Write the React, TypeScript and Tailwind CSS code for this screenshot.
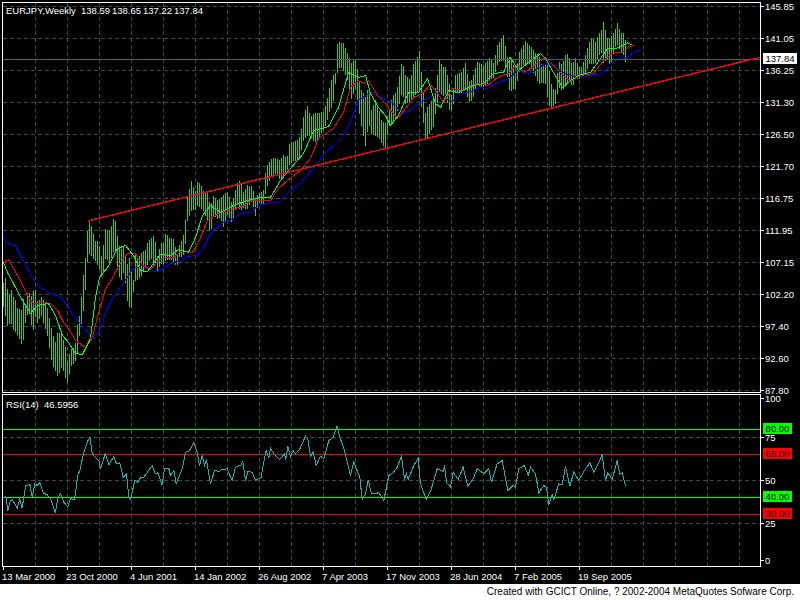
const zoomBars = (ox: number, oy: number, d: number[][]) =>
  d.map(([X, hi, lo]) => [ox + X / 3, oy + hi / 3, oy + lo / 3]);

const keyBars: number[][] = [
  ...zoomBars(0, 200, [
    [10, 250, 318], [16, 230, 350], [22, 275, 380], [28, 285, 365], [35, 262, 370], [40, 300, 390], [46, 300, 395], [52, 330, 402], [58, 325, 418], [64, 330, 432], [70, 290, 415], [76, 320, 355], [82, 270, 340], [88, 280, 340], [94, 290, 380], [100, 270, 390], [106, 270, 340], [112, 310, 370], [122, 290, 340], [130, 300, 370], [140, 320, 400], [155, 395, 490], [165, 425, 510], [172, 393, 528], [185, 405, 495], [195, 440, 530], [202, 490, 548], [210, 445, 500], [217, 450, 490], [225, 430, 480], [232, 365, 455], [238, 345, 395], [248, 235, 340], [256, 165, 255], [263, 66, 155], [270, 66, 160], [280, 105, 175], [287, 129, 180], [294, 120, 200], [300, 155, 210], [306, 180, 245], [312, 90, 180], [318, 84, 165], [325, 96, 190], [333, 78, 170], [340, 52, 150], [347, 66, 150], [352, 120, 220], [358, 140, 230], [365, 150, 240], [372, 130, 200], [378, 210, 290], [385, 165, 315], [392, 200, 330], [398, 255, 280], [405, 160, 240], [412, 180, 235], [420, 160, 230], [428, 155, 215], [436, 150, 200], [442, 125, 190], [452, 115, 170], [460, 108, 200], [466, 130, 185], [472, 175, 215], [480, 130, 190], [490, 130, 190], [497, 90, 175], [503, 112, 180], [510, 115, 175], [518, 112, 180], [523, 130, 190], [530, 170, 195], [538, 130, 165], [547, 115, 170], [553, 85, 150],
  ]),
  ...zoomBars(100, 130, [
    [261, 200, 270], [275, 145, 235], [283, 195, 240], [290, 155, 225], [300, 160, 230], [310, 185, 240], [320, 185, 270], [330, 230, 315], [340, 195, 250], [350, 210, 265], [360, 205, 260], [370, 195, 290], [380, 185, 250], [395, 220, 275], [410, 160, 220], [420, 150, 240], [430, 190, 230], [440, 165, 235], [455, 170, 210], [465, 205, 255], [475, 190, 215], [490, 180, 220], [497, 110, 175], [507, 95, 150],
  ]),
  ...zoomBars(270, 20, [
    [5, 415, 465], [16, 415, 460], [28, 420, 475], [40, 405, 470], [50, 415, 450], [58, 365, 430], [70, 365, 420], [82, 360, 420], [90, 345, 400], [100, 285, 355], [110, 255, 345], [120, 290, 345], [130, 280, 360], [140, 280, 365], [150, 278, 340], [160, 275, 325], [168, 250, 310], [178, 198, 270], [187, 165, 255], [195, 160, 190], [202, 58, 150], [210, 70, 135], [220, 70, 150], [232, 100, 180], [243, 130, 235], [256, 115, 200], [270, 205, 300], [285, 230, 375], [295, 195, 305], [303, 270, 340], [315, 240, 345], [325, 265, 350], [333, 300, 365], [345, 310, 385], [355, 280, 315], [365, 230, 310], [375, 220, 290], [383, 195, 265], [395, 118, 215], [405, 165, 250], [420, 180, 240], [430, 125, 230], [438, 120, 215], [447, 92, 210], [458, 210, 300], [465, 280, 350], [473, 255, 350], [480, 250, 330], [490, 225, 315], [497, 195, 265], [507, 118, 215], [517, 143, 225], [525, 140, 220], [535, 180, 265], [545, 235, 270], [555, 165, 215], [565, 160, 215], [575, 155, 215], [585, 130, 205], [595, 185, 245], [605, 180, 240], [620, 125, 190], [630, 130, 195], [640, 135, 200], [650, 125, 190], [660, 110, 175], [670, 130, 170], [682, 70, 130], [690, 65, 120], [700, 43, 120], [710, 112, 160], [718, 110, 215], [727, 125, 205], [735, 160, 205], [748, 90, 150], [755, 85, 135], [765, 62, 130], [775, 72, 125], [785, 85, 150], [795, 100, 165], [805, 105, 190],
  ]),
  ...zoomBars(530, 0, [
    [35, 200, 245], [45, 190, 250], [55, 200, 315], [65, 265, 320], [75, 270, 310], [85, 185, 260], [95, 195, 270], [108, 155, 255], [120, 180, 230], [125, 195, 265], [135, 175, 230], [145, 200, 235], [155, 200, 225], [165, 165, 225], [175, 130, 190], [185, 110, 190], [195, 125, 185], [205, 100, 165], [212, 95, 150], [220, 62, 190], [230, 115, 170], [240, 115, 195], [258, 80, 125], [262, 65, 135], [270, 100, 150], [280, 100, 165], [287, 130, 190],
  ]),
];

const barX = Array.from({ length: 312 }, (_, k) => 3 + 2 * k);
const barsPath = barX
  .map((x) => {
    let i = 0;
    while (i < keyBars.length - 2 && keyBars[i + 1][0] < x) i++;
    const a = keyBars[i];
    const b = keyBars[i + 1];
    const t = Math.min(1, Math.max(0, (x - a[0]) / (b[0] - a[0])));
    const hi = Math.round(a[1] + (b[1] - a[1]) * t);
    const lo = Math.round(a[2] + (b[2] - a[2]) * t);
    return `M${x + 0.5} ${hi}V${lo + 1}`;
  })
  .join("");

const pts = (d: number[][]) => d.map(([x, y]) => `${x + 0.5},${y + 0.5}`).join(" ");

const blue = [[3,236],[6,243],[15,245],[20,255],[28,270],[35,282],[40,287],[50,293],[60,296],[65,303],[73,315],[80,323],[88,333],[93,338],[100,328],[106,310],[112,298],[120,287],[128,275],[133,268],[142,265],[148,270],[157,271],[163,268],[170,263],[180,260],[187,256],[197,255],[203,247],[210,233],[222,222],[230,220],[240,213],[250,212],[258,205],[270,202],[278,202],[290,190],[300,183],[313,168],[325,152],[335,143],[343,135],[350,122],[358,100],[365,95],[372,92],[380,97],[388,100],[395,105],[402,114],[413,107],[422,100],[430,97],[437,90],[445,98],[452,101],[460,93],[470,91],[480,87],[488,88],[497,82],[507,79],[517,70],[530,73],[540,66],[548,62],[555,67],[563,72],[573,76],[580,76],[600,74],[610,65],[618,57],[627,57],[633,52],[641,49]];
const red = [[3,262],[8,259],[13,268],[20,280],[27,295],[33,303],[43,302],[50,303],[57,310],[63,322],[68,328],[75,340],[85,347],[92,337],[98,313],[105,288],[112,278],[118,265],[127,253],[135,253],[142,265],[150,269],[158,260],[165,257],[173,257],[182,250],[192,252],[198,242],[207,220],[220,212],[230,209],[242,206],[250,200],[270,200],[278,188],[287,180],[300,170],[310,158],[318,138],[333,128],[343,112],[350,87],[358,80],[363,83],[368,80],[377,95],[385,103],[397,118],[405,108],[413,97],[422,93],[430,84],[437,93],[443,102],[452,88],[463,90],[477,83],[487,85],[497,77],[508,73],[517,63],[523,72],[530,68],[537,62],[545,57],[553,65],[563,75],[570,81],[580,75],[593,73],[603,60],[613,52],[622,52],[628,46],[635,45]];
const lime = [[3,262],[7,272],[13,283],[22,300],[30,313],[37,305],[48,303],[55,315],[62,335],[68,342],[75,353],[82,354],[90,338],[95,297],[99,277],[107,267],[117,248],[125,245],[133,255],[140,270],[147,271],[155,260],[160,254],[170,255],[178,249],[188,252],[195,237],[202,215],[210,205],[220,212],[233,205],[247,200],[258,197],[270,197],[280,180],[290,168],[303,153],[313,130],[328,126],[338,107],[348,72],[358,77],[365,75],[370,93],[378,107],[385,115],[390,125],[398,115],[408,92],[418,92],[427,78],[435,103],[440,107],[448,90],[457,92],[473,85],[483,83],[493,73],[503,72],[510,57],[518,70],[528,62],[540,53],[545,58],[553,72],[562,87],[570,80],[580,74],[590,72],[600,58],[607,48],[615,48],[623,45],[627,42],[632,45]];

const rsiRaw = (ox: number, d: number[][]) => d.map(([X, Y]) => [ox + X / 3, 385 + Y / 3]);
const rsi = [
  ...rsiRaw(0, [[10,338],[16,332],[22,375],[30,345],[36,343],[50,368],[58,340],[65,368],[70,335],[76,300],[88,297],[95,335],[103,295],[110,300],[118,292],[128,322],[140,328],[150,340],[165,382],[172,335],[180,325],[190,350],[202,364],[210,340],[222,342],[232,270],[238,255],[250,200],[260,170],[268,155],[276,208],[295,225],[300,250],[314,205],[325,238],[340,213],[348,235],[358,232],[368,275],[378,265],[385,335],[390,342],[403,285],[412,290],[418,278],[430,275],[455,240],[465,265],[472,262],[485,298],[492,248],[505,250],[510,270],[520,255],[527,295],[545,250],[555,200],[565,198],[580,172],[590,200],[597,242],[605,210],[612,240],[618,222],[630,295],[642,255],[655,258],[665,252],[680,250],[695,285],[705,245],[722,238],[727,228],[735,285],[742,258],[755,260],[765,285],[782,275],[788,240],[797,195],[805,218]]),
  ...rsiRaw(270, [[0,188],[12,208],[28,222],[42,205],[46,222],[52,182],[60,215],[68,195],[75,205],[88,190],[105,152],[112,160],[120,212],[128,200],[137,240],[150,212],[160,220],[175,165],[188,155],[200,122],[208,155],[222,195],[240,270],[250,228],[262,262],[268,275],[275,342],[285,325],[293,283],[303,325],[325,322],[340,345],[355,270],[368,262],[380,245],[393,212],[402,280],[408,265],[413,282],[430,240],[443,218],[450,295],[467,342],[482,312],[500,250],[518,258],[522,240],[528,290],[540,305],[548,260],[563,282],[578,245],[592,302],[608,280],[620,250],[640,265],[655,250],[663,290],[680,235],[695,225],[712,315],[728,300],[735,305],[745,250],[762,240],[773,270]]),
  ...rsiRaw(530, [[0,245],[15,265],[25,322],[40,300],[48,305],[55,358],[65,328],[70,342],[85,295],[95,298],[105,243],[118,302],[130,260],[145,285],[160,258],[178,232],[190,260],[205,232],[215,205],[225,285],[232,262],[245,282],[260,225],[268,265],[275,262],[285,302]]),
];

const gridX = Array.from({ length: 23 }, (_, i) => 35 + 32 * i).filter((x) => x < 760);
const gridY = Array.from({ length: 13 }, (_, i) => 6 + 32 * i);
const prices = ["145.85","141.05","136.25","131.30","126.50","121.70","116.75","111.95","107.15","102.20","97.40","92.60","87.80"];
const dates = ["13 Mar 2000","23 Oct 2000","4 Jun 2001","14 Jan 2002","26 Aug 2002","7 Apr 2003","17 Nov 2003","28 Jun 2004","7 Feb 2005","19 Sep 2005"];
const GRID = "#2f4f4f";

function VGrid({ y1, y2 }: { y1: number; y2: number }) {
  return (
    <>
      {gridX.map((x) => (
        <line key={x} x1={x + 0.5} x2={x + 0.5} y1={y1} y2={y2} stroke={GRID} strokeDasharray="4 3" />
      ))}
    </>
  );
}
function HGrid({ ys }: { ys: number[] }) {
  return (
    <>
      {ys.map((y) => (
        <line key={y} x1={3} x2={760} y1={y + 0.5} y2={y + 0.5} stroke={GRID} strokeDasharray="4 3" />
      ))}
    </>
  );
}
function Level({ y, c }: { y: number; c: string }) {
  return <line x1={3} x2={760} y1={y + 0.5} y2={y + 0.5} stroke={c} />;
}

function AxisLabel({ t, cls }: { t: string; cls?: string }) {
  return (
    <div className={`flex items-center h-[10px] ${cls ?? ""}`}>
      <span className="w-[3px] h-px bg-white shrink-0" />
      <span className="pl-[1px] pt-px">{t}</span>
    </div>
  );
}

export default function App() {
  return (
    <div className="w-[800px] h-[600px] bg-black text-white overflow-hidden flex flex-col font-['Liberation_Sans',sans-serif] text-[9.5px] leading-none">
      <div className="h-[584px] pt-[2px] flex flex-col">
        <div className="flex pl-[2px] h-[391px]">
          <div className="relative w-[759px] h-[391px] border border-white shrink-0">
            <svg className="block w-[757px] h-[389px]" viewBox="3 3 757 389" shapeRendering="crispEdges" fill="none">
              <VGrid y1={3} y2={392} />
              <HGrid ys={gridY} />
              <path d={barsPath} stroke="#32cd32" />
              <polyline points={pts(blue)} stroke="#0000ff" />
              <polyline points={pts(red)} stroke="#ff0000" />
              <polyline points={pts(lime)} stroke="#00ff00" />
              <Level y={59} c="#466464" />
              <line x1={88} y1={221} x2={760} y2={57.4} stroke="#ff0000" strokeWidth={1.4} />
            </svg>
            <div className="absolute left-[3px] top-[3px] flex whitespace-nowrap">
              <span className="w-[75px]">EURJPY,Weekly</span>
              <span className="w-[31px]">138.59</span>
              <span className="w-[31px]">138.65</span>
              <span className="w-[31px]">137.22</span>
              <span className="w-[31px]">137.84</span>
            </div>
          </div>
          <div className="relative flex flex-col -mt-[1px] w-[39px]">
            {prices.map((p) => (
              <div key={p} className="h-[32px] flex items-start shrink-0">
                <AxisLabel t={p} />
              </div>
            ))}
            <div className="absolute left-[2px] top-[52px] w-[34px] h-[11px] bg-white text-black flex items-center justify-center">137.84</div>
          </div>
        </div>
        <div className="flex pl-[2px] h-[173px] mt-px">
          <div className="relative w-[759px] h-[173px] border border-white shrink-0">
            <svg className="block w-[757px] h-[171px]" viewBox="3 395 757 171" shapeRendering="crispEdges" fill="none">
              <VGrid y1={395} y2={566} />
              <HGrid ys={[437, 480, 523]} />
              <Level y={429} c="#00ff00" />
              <Level y={454} c="#ff0000" />
              <Level y={497} c="#00ff00" />
              <Level y={514} c="#ff0000" />
              <polyline points={pts(rsi)} stroke="#20b2aa" />
            </svg>
            <div className="absolute left-[3px] top-[5px] whitespace-pre">RSI(14)  46.5956</div>
          </div>
          <div className="relative flex flex-col w-[39px]">
            <AxisLabel t="100" cls="mt-[-1px]" />
            <AxisLabel t="75" cls="mt-[29px]" />
            <AxisLabel t="50" cls="mt-[33px]" />
            <AxisLabel t="25" cls="mt-[33px]" />
            <AxisLabel t="0" cls="mt-[27px]" />
            <div className="absolute left-[2px] top-[29px] w-[29px] h-[11px] bg-[#00ff00] text-black flex items-center justify-center">80.00</div>
            <div className="absolute left-[2px] top-[54px] w-[29px] h-[11px] bg-[#ff0000] text-black flex items-center justify-center">65.00</div>
            <div className="absolute left-[2px] top-[97px] w-[29px] h-[11px] bg-[#00ff00] text-black flex items-center justify-center">40.00</div>
            <div className="absolute left-[2px] top-[114px] w-[29px] h-[11px] bg-[#ff0000] text-black flex items-center justify-center">30.00</div>
          </div>
        </div>
        <div className="flex pl-[3px] h-[17px]">
          {dates.map((d) => (
            <div key={d} className="w-[64px] flex flex-col items-start">
              <span className="w-px h-[3px] bg-white" />
              <span className="whitespace-nowrap -ml-[1px] mt-[2px]">{d}</span>
            </div>
          ))}
        </div>
      </div>
      <div className="h-[16px] bg-white text-black text-[10px] flex items-center justify-end pr-[6px]">
        Created with GCICT Online, ? 2002-2004 MetaQuotes Sofware Corp.
      </div>
    </div>
  );
}
